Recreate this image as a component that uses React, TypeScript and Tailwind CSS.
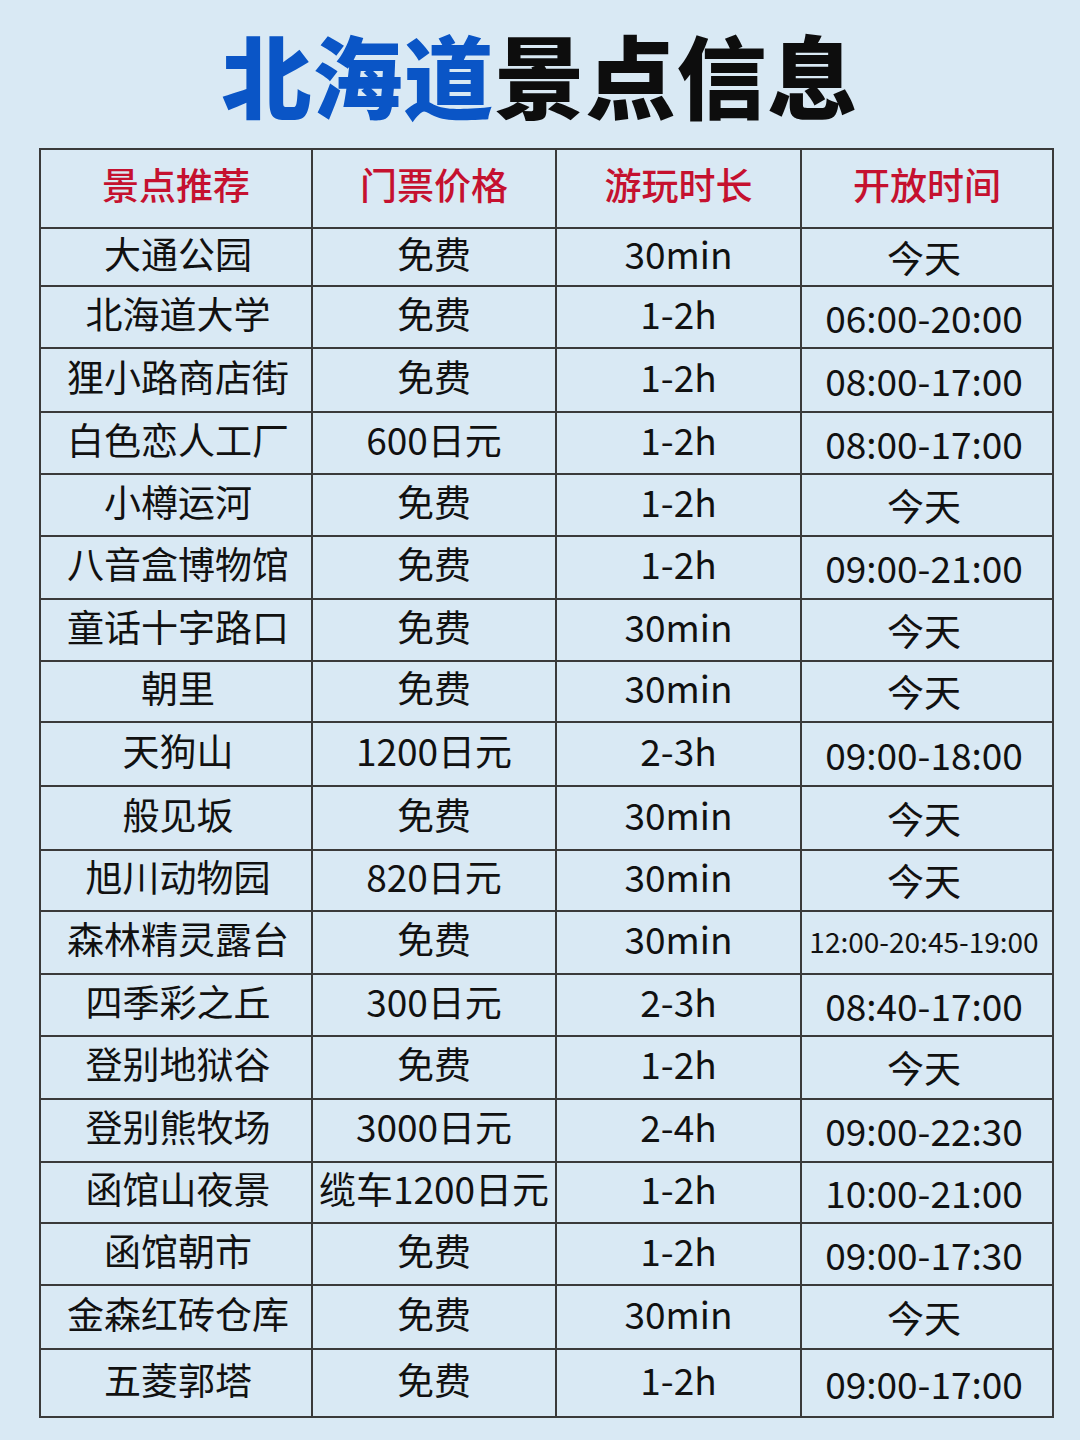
import React from "react";

const rows: [string, string, string, string, string][] = [
  ["大通公园", "免费", "30min", "今天", "h-[58px]"],
  ["北海道大学", "免费", "1-2h", "06:00-20:00", "h-[62px]"],
  ["狸小路商店街", "免费", "1-2h", "08:00-17:00", "h-[64px]"],
  ["白色恋人工厂", "600日元", "1-2h", "08:00-17:00", "h-[62px]"],
  ["小樽运河", "免费", "1-2h", "今天", "h-[62px]"],
  ["八音盒博物馆", "免费", "1-2h", "09:00-21:00", "h-[63px]"],
  ["童话十字路口", "免费", "30min", "今天", "h-[62px]"],
  ["朝里", "免费", "30min", "今天", "h-[61px]"],
  ["天狗山", "1200日元", "2-3h", "09:00-18:00", "h-[64px]"],
  ["般见坂", "免费", "30min", "今天", "h-[64px]"],
  ["旭川动物园", "820日元", "30min", "今天", "h-[61px]"],
  ["森林精灵露台", "免费", "30min", "12:00-20:45-19:00", "h-[63px]"],
  ["四季彩之丘", "300日元", "2-3h", "08:40-17:00", "h-[62px]"],
  ["登别地狱谷", "免费", "1-2h", "今天", "h-[63px]"],
  ["登别熊牧场", "3000日元", "2-4h", "09:00-22:30", "h-[63px]"],
  ["函馆山夜景", "缆车1200日元", "1-2h", "10:00-21:00", "h-[61px]"],
  ["函馆朝市", "免费", "1-2h", "09:00-17:30", "h-[62px]"],
  ["金森红砖仓库", "免费", "30min", "今天", "h-[64px]"],
  ["五菱郭塔", "免费", "1-2h", "09:00-17:00", "h-[68px]"],
];

const font = { fontFamily: '"Noto Sans CJK SC", "Noto Sans", sans-serif' };

const cell =
  "border-2 border-[#3a3a3a] text-center text-[37px] text-[#111] leading-none p-0 whitespace-nowrap";

export default function App() {
  return (
    <div
      className="w-[1080px] h-[1440px] bg-[#d9e9f4] overflow-hidden"
      style={font}
    >
      <div className="pt-[28px] h-[148px]">
        <h1 className="text-center text-[90px] leading-none font-black tracking-[1px]">
          <span className="text-[#0a55c6]">北海道</span>
          <span className="text-[#0d0d0d]">景点信息</span>
        </h1>
      </div>
      <table className="ml-[39px] w-[1013px] border-collapse table-fixed border-2 border-[#3a3a3a]">
        <colgroup>
          <col className="w-[272px]" />
          <col className="w-[244px]" />
          <col className="w-[245px]" />
          <col className="w-[252px]" />
        </colgroup>
        <thead>
          <tr className="h-[79px]">
            {["景点推荐", "门票价格", "游玩时长", "开放时间"].map((h) => (
              <th
                key={h}
                className="border-2 border-[#3a3a3a] text-center text-[37px] font-medium text-[#c5112f] leading-none p-0"
              >
                <span className="relative top-[-4px]">{h}</span>
              </th>
            ))}
          </tr>
        </thead>
        <tbody>
          {rows.map((r, i) => (
            <tr key={i} className={r[4]}>
              <td className={cell}>
                <span className="relative top-[-4px] left-[2px]">{r[0]}</span>
              </td>
              <td className={cell}>
                <span className="relative top-[-4px]">{r[1]}</span>
              </td>
              <td className={cell}>
                <span className="relative top-[-4px]">{r[2]}</span>
              </td>
              <td
                className={
                  r[3].length > 12
                    ? "border-2 border-[#3a3a3a] text-center text-[28px] text-[#111] leading-none p-0 whitespace-nowrap"
                    : cell
                }
              >
                <span
                  className={
                    r[3].length > 12
                      ? "relative top-[-2px] left-[-3px]"
                      : "relative top-[0px] left-[-3px]"
                  }
                >
                  {r[3]}
                </span>
              </td>
            </tr>
          ))}
        </tbody>
      </table>
    </div>
  );
}
